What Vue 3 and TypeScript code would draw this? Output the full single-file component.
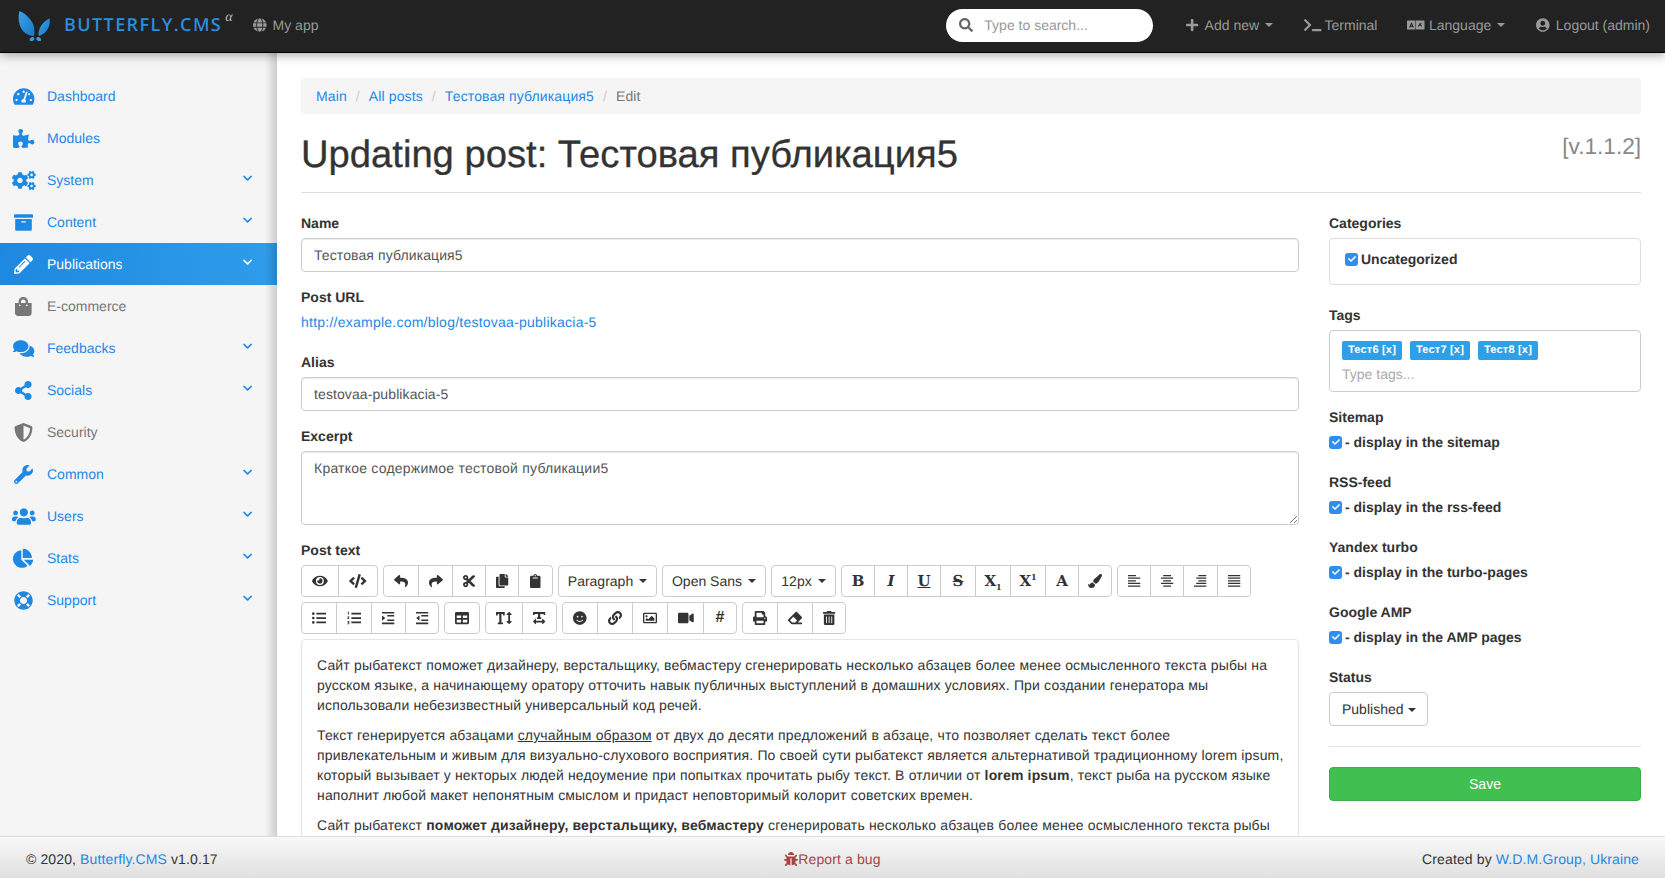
<template>
<div class="app">
  <header class="navbar">
    <div class="logo">
      <svg class="logo-mark" viewBox="0 0 36 33" aria-hidden="true">
        <defs>
          <linearGradient id="wing" x1="0" y1="0" x2="1" y2="1">
            <stop offset="0" stop-color="#35a5ee" />
            <stop offset="1" stop-color="#1b76c4" />
          </linearGradient>
        </defs>
        <path fill="url(#wing)" d="M1.500 0C-.5 8 1 17 6 22c3 3 8 4.500 11 4.500 1-6.500 0-13.500-4-17.500C10 5 5.500 1.500 1.500 0z" />
        <path fill="url(#wing)" d="M33.500 8c-5 2-9.500 7-11 12-.7 2.500-1 5-.5 6.500 4-1 8.500-4.500 10.500-9.500 1.200-3 1.300-6 1-9z" />
        <path fill="#2f9ee8" d="M15.500 27.500c-2-.2-3.700 2.500-3 4 .7 1 4.800.5 5-2.300 0-.9-1-1.600-2-1.700zM21 27.500c2-.2 4 2.300 3.500 3.700-.6 1.300-4.800 1-5.200-1.700 0-1 .7-1.900 1.700-2z" />
      </svg>
      <span class="logo-text">BUTTERFLY.CMS</span><sup class="logo-alpha">α</sup>
    </div>
    <a class="nav-link myapp"><Ico name="globe" class="nav-ico" />My app</a>
    <div class="search">
      <Ico name="search" class="search-ico" />
      <span>Type to search...</span>
    </div>
    <a class="nav-link add"><Ico name="plus" class="nav-ico" />Add new<i class="caret"></i></a>
    <a class="nav-link term"><Ico name="terminal" class="nav-ico tight" />Terminal</a>
    <a class="nav-link lang"><Ico name="language" class="nav-ico tight" />Language<i class="caret"></i></a>
    <a class="nav-link out"><Ico name="user" class="nav-ico" />Logout (admin)</a>
  </header>

  <div class="body">
    <aside class="sidebar">
      <a
        v-for="item in menu"
        :key="item.label"
        class="menu-item"
        :class="{ active: item.active, muted: item.muted }"
      >
        <span class="menu-ico"><Ico :name="item.icon" /></span>
        <span class="menu-label">{{ item.label }}</span>
        <Ico v-if="item.sub" name="chevron" class="chev" />
      </a>
    </aside>

    <main class="content">
      <ol class="crumbs">
        <li><a>Main</a></li>
        <li><a>All posts</a></li>
        <li><a>Тестовая публикация5</a></li>
        <li class="here">Edit</li>
      </ol>

      <div class="title-row">
        <h1>Updating post: Тестовая публикация5</h1>
        <span class="version">[v.1.1.2]</span>
      </div>

      <div class="columns">
        <section class="col-main">
          <label>Name</label>
          <div class="input">Тестовая публикация5</div>
          <label class="mt15">Post URL</label>
          <a class="url">http://example.com/blog/testovaa-publikacia-5</a>
          <label class="mt20">Alias</label>
          <div class="input">testovaa-publikacia-5</div>
          <label class="mt15">Excerpt</label>
          <div class="input area">
            Краткое содержимое тестовой публикации5
            <svg class="grip" viewBox="0 0 10 10"><path d="M9 2 2 9M9 6 6 9" stroke="#777" fill="none" /></svg>
          </div>
          <label class="mt15">Post text</label>

          <div v-for="(row, r) in toolbar" :key="r" class="tb-row">
            <div v-for="(group, g) in row" :key="g" class="tb-group">
              <button
                v-for="(b, i) in group"
                :key="i"
                class="tb-btn"
                :class="b.cls"
                :style="{ width: b.w + 'px' }"
              >
                <Ico v-if="b.icon" :name="b.icon" />
                <span v-else-if="b.text">{{ b.text }}<sub v-if="b.sub">{{ b.sub }}</sub><sup v-if="b.sup">{{ b.sup }}</sup></span>
                <i v-if="b.drop" class="caret dark"></i>
              </button>
            </div>
          </div>

          <div class="editor">
            <p>Сайт рыбатекст поможет дизайнеру, верстальщику, вебмастеру сгенерировать несколько абзацев более менее осмысленного текста рыбы на русском языке, а начинающему оратору отточить навык публичных выступлений в домашних условиях. При создании генератора мы использовали небезизвестный универсальный код речей.</p>
            <p>Текст генерируется абзацами <u>случайным образом</u> от двух до десяти предложений в абзаце, что позволяет сделать текст более привлекательным и живым для визуально-слухового восприятия. По своей сути рыбатекст является альтернативой традиционному lorem ipsum, который вызывает у некторых людей недоумение при попытках прочитать рыбу текст. В отличии от <b>lorem ipsum</b>, текст рыба на русском языке наполнит любой макет непонятным смыслом и придаст неповторимый колорит советских времен.</p>
            <p>Сайт рыбатекст <b>поможет дизайнеру, верстальщику, вебмастеру</b> сгенерировать несколько абзацев более менее осмысленного текста рыбы на русском языке, а начинающему оратору отточить навык публичных выступлений.</p>
          </div>
        </section>

        <section class="col-side">
          <label>Categories</label>
          <div class="box cats"><span class="check"><Ico name="tick" /></span><b>Uncategorized</b></div>
          <label class="mt20">Tags</label>
          <div class="box tags">
            <div class="tag-list">
              <span v-for="t in tags" :key="t" class="tag">{{ t }} [x]</span>
            </div>
            <span class="tag-input">Type tags...</span>
          </div>
          <template v-for="(o, i) in options" :key="o.title">
            <label :class="i === 0 ? 'mt15' : 'mt20'">{{ o.title }}</label>
            <div class="opt"><span class="check"><Ico name="tick" /></span><b>- {{ o.text }}</b></div>
          </template>
          <label class="mt20">Status</label>
          <div class="select">Published<i class="caret dark"></i></div>
          <hr />
          <button class="save">Save</button>
        </section>
      </div>
    </main>
  </div>

  <footer class="footer">
    <span>© 2020, <a>Butterfly.CMS</a> v1.0.17</span>
    <span class="bug"><Ico name="bug" />Report a bug</span>
    <span>Created by <a>W.D.M.Group, Ukraine</a></span>
  </footer>
</div>
</template>

<script setup lang="ts">
import { h } from 'vue'

type IconDef = { vb: string; d: string; eo?: boolean }

const bars = (ys: [number, number, number][]) =>
  ys.map(([x, y, w]) => `M${x} ${y}h${w}v44H${x}z`).join('')

const icons: Record<string, IconDef> = {
  globe: { vb: '0 0 496 512', d: 'M336.5 160C322 70.7 287.8 8 248 8s-74 62.7-88.5 152h177zM152 256c0 22.2 1.2 43.5 3.3 64h185.3c2.1-20.5 3.3-41.8 3.3-64s-1.2-43.5-3.3-64H155.3c-2.1 20.500-3.3 41.800-3.3 64zm324.700-96c-28.600-67.900-86.500-120.400-158-141.600 24.400 33.800 41.200 84.700 50 141.600h108zM177.200 18.400C105.800 39.600 47.800 92.100 19.300 160h108c8.700-56.900 25.500-107.800 49.900-141.600zM487.400 192H372.700c2.100 21 3.300 42.500 3.300 64s-1.200 43-3.300 64h114.600c5.500-20.500 8.600-41.800 8.600-64s-3.100-43.500-8.500-64zM120 256c0-21.500 1.200-43 3.300-64H8.600C3.200 212.500 0 233.800 0 256s3.200 43.500 8.600 64h114.600c-2-21-3.200-42.500-3.200-64zm39.500 96c14.500 89.300 48.700 152 88.500 152s74-62.700 88.500-152h-177zm159.300 141.600c71.400-21.200 129.400-73.700 158-141.600h-108c-8.800 56.900-25.600 107.800-50 141.600zM19.300 352c28.600 67.900 86.500 120.400 158 141.600-24.400-33.800-41.200-84.700-50-141.600h-108z' },
  search: { vb: '0 0 512 512', d: 'M505 442.700L405.300 343c-4.500-4.500-10.600-7-17-7H372c27.600-35.300 44-79.700 44-128C416 93.100 322.900 0 208 0S0 93.100 0 208s93.100 208 208 208c48.300 0 92.700-16.400 128-44v16.300c0 6.400 2.500 12.500 7 17l99.700 99.700c9.400 9.400 24.600 9.400 33.900 0l28.300-28.300c9.400-9.400 9.400-24.600.1-34zM208 336c-70.700 0-128-57.200-128-128 0-70.700 57.200-128 128-128 70.700 0 128 57.200 128 128 0 70.700-57.200 128-128 128z' },
  plus: { vb: '0 0 448 512', d: 'M416 208H272V64c0-17.670-14.330-32-32-32h-32c-17.670 0-32 14.330-32 32v144H32c-17.670 0-32 14.330-32 32v32c0 17.670 14.330 32 32 32h144v144c0 17.670 14.330 32 32 32h32c17.670 0 32-14.330 32-32V304h144c17.670 0 32-14.330 32-32v-32c0-17.670-14.330-32-32-32z' },
  terminal: { vb: '0 0 640 512', d: 'M257.981 272.971L63.638 467.314c-9.373 9.373-24.569 9.373-33.941 0L7.029 444.647c-9.357-9.357-9.375-24.522-.04-33.901L161.011 256 6.990 101.255c-9.335-9.379-9.317-24.544.04-33.901l22.667-22.667c9.373-9.373 24.569-9.373 33.941 0L257.981 239.030c9.373 9.372 9.373 24.568 0 33.941zM640 456v-32c0-13.255-10.745-24-24-24H312c-13.255 0-24 10.745-24 24v32c0 13.255 10.745 24 24 24h304c13.255 0 24-10.745 24-24z' },
  language: { vb: '0 0 640 512', eo: true, d: 'M20 90h290v332H20a20 20 0 0 1-20-20V110a20 20 0 0 1 20-20zM155 160l-75 190h45l12-34h56l12 34h45l-75-190h-20zm10 60l16 60h-32l16-60zM330 90h290a20 20 0 0 1 20 20v292a20 20 0 0 1-20 20H330V90zm60 70v36h70c-8 40-30 70-70 96l24 30c24-16 44-36 58-58 14 22 34 42 58 58l24-30c-26-16-44-36-56-60h34v-36H390z' },
  user: { vb: '0 0 496 512', d: 'M248 8C111 8 0 119 0 256s111 248 248 248 248-111 248-248S385 8 248 8zm0 96c48.600 0 88 39.400 88 88s-39.400 88-88 88-88-39.400-88-88 39.400-88 88-88zm0 344c-58.700 0-111.300-26.600-146.500-68.200 18.800-35.400 55.600-59.800 98.500-59.800 2.400 0 4.800.4 7.100 1.100 13 4.200 26.600 6.900 40.900 6.900 14.300 0 28-2.700 40.900-6.900 2.300-.7 4.700-1.100 7.100-1.100 42.900 0 79.700 24.400 98.500 59.800C359.300 421.400 306.700 448 248 448z' },
  chevron: { vb: '0 0 448 512', d: 'M207.029 381.476L12.686 187.132c-9.373-9.373-9.373-24.569 0-33.941l22.667-22.667c9.357-9.357 24.522-9.375 33.901-.04L224 284.505l154.745-154.021c9.379-9.335 24.544-9.317 33.901.04l22.667 22.667c9.373 9.373 9.373 24.569 0 33.941L240.971 381.476c-9.373 9.372-24.569 9.372-33.942 0z' },
  dashboard: { vb: '0 0 576 512', d: 'M288 32C128.940 32 0 160.940 0 320c0 52.800 14.250 102.260 39.060 144.800 5.610 9.620 16.300 15.200 27.440 15.200h443c11.140 0 21.830-5.580 27.440-15.200C561.750 422.260 576 372.800 576 320c0-159.060-128.940-288-288-288zm0 64c14.710 0 26.580 10.130 30.320 23.650-1.110 2.260-2.640 4.230-3.450 6.670l-9.220 27.670c-5.130 3.490-10.970 6.010-17.640 6.010-17.670 0-32-14.330-32-32S270.330 96 288 96zM96 384c-17.670 0-32-14.330-32-32s14.330-32 32-32 32 14.330 32 32-14.330 32-32 32zm48-160c-17.670 0-32-14.330-32-32s14.330-32 32-32 32 14.330 32 32-14.330 32-32 32zm246.770-72.410l-61.330 184C343.130 347.330 352 364.540 352 384c0 11.720-3.380 22.550-8.880 32H232.880c-5.500-9.450-8.880-20.280-8.880-32 0-33.940 26.500-61.430 59.900-63.590l61.340-184.010c4.170-12.560 17.730-19.450 30.360-15.170 12.570 4.190 19.350 17.790 15.170 30.360zm14.660 57.200l15.520-46.550c3.470-1.290 7.130-2.230 11.050-2.230 17.670 0 32 14.330 32 32s-14.330 32-32 32c-11.380-.01-20.890-6.280-26.570-15.220zM480 384c-17.670 0-32-14.330-32-32s14.330-32 32-32 32 14.330 32 32-14.330 32-32 32z' },
  puzzle: { vb: '0 0 576 512', d: 'M519.442 288.651c-41.519 0-59.500 31.593-82.058 31.593C377.409 320.244 432 144 432 144s-196.288 80-196.288-3.297c0-35.827 36.288-46.250 36.288-85.985C272 19.216 243.885 0 210.539 0c-34.654 0-66.366 18.891-66.366 56.346 0 41.364 31.711 59.277 31.711 81.750C175.885 207.719 0 166.758 0 166.758v333.237s178.635 41.047 178.635-28.662c0-22.473-40-40.107-40-81.471 0-37.456 29.250-56.346 63.577-56.346 33.673 0 61.788 19.216 61.788 54.717 0 39.735-36.288 50.158-36.288 85.985 0 60.803 129.675 25.730 181.230 25.730 0 0-34.725-120.101 25.827-120.101 35.962 0 46.423 36.152 86.308 36.152C556.712 416 576 387.990 576 354.443c0-34.199-18.962-65.792-56.558-65.792z' },
  cogs: { vb: '0 0 640 512', d: 'M512.100 191l-8.200 14.300c-3 5.300-9.400 7.500-15.100 5.400-11.800-4.400-22.600-10.700-32.100-18.600-4.600-3.800-5.800-10.500-2.800-15.700l8.200-14.300c-6.900-8-12.300-17.300-15.900-27.400h-16.500c-6 0-11.200-4.300-12.200-10.300-2-12-2.100-24.600 0-37.100 1-6 6.200-10.400 12.200-10.400h16.500c3.600-10.100 9-19.400 15.900-27.400l-8.200-14.300c-3-5.200-1.900-11.900 2.800-15.700 9.500-7.900 20.400-14.200 32.100-18.600 5.700-2.100 12.100.1 15.100 5.400l8.200 14.300c10.500-1.900 21.200-1.900 31.700 0L552 6.300c3-5.300 9.400-7.500 15.100-5.400 11.800 4.400 22.600 10.700 32.100 18.600 4.600 3.800 5.800 10.500 2.800 15.700l-8.200 14.300c6.900 8 12.300 17.300 15.900 27.400h16.500c6 0 11.200 4.300 12.200 10.300 2 12 2.100 24.600 0 37.100-1 6-6.200 10.400-12.200 10.400h-16.500c-3.600 10.100-9 19.400-15.900 27.400l8.200 14.300c3 5.200 1.900 11.900-2.800 15.700-9.500 7.900-20.400 14.200-32.100 18.600-5.700 2.100-12.100-.1-15.100-5.400l-8.200-14.300c-10.400 1.900-21.200 1.900-31.700 0zm-10.500-58.800c38.500 29.600 82.400-14.300 52.800-52.800-38.500-29.700-82.400 14.300-52.800 52.800zM386.300 286.100l33.700 16.800c10.100 5.800 14.500 18.100 10.500 29.100-8.900 24.200-26.400 46.400-42.600 65.800-7.400 8.900-20.200 11.100-30.300 5.300l-29.100-16.800c-16 13.700-34.600 24.600-54.900 31.700v33.600c0 11.600-8.300 21.600-19.700 23.600-24.600 4.200-50.400 4.400-75.900 0-11.500-2-20-11.900-20-23.600V418c-20.300-7.200-38.900-18-54.900-31.700L74 403c-10 5.800-22.900 3.600-30.300-5.300-16.200-19.400-33.300-41.600-42.200-65.700-4-10.900.4-23.200 10.500-29.100l33.300-16.800c-3.900-20.900-3.900-42.400 0-63.400L12 205.800c-10.100-5.800-14.600-18.100-10.500-29 8.900-24.200 26-46.400 42.200-65.800 7.400-8.900 20.200-11.100 30.300-5.300l29.100 16.800c16-13.700 34.600-24.600 54.900-31.700V57.100c0-11.500 8.200-21.500 19.600-23.500 24.600-4.200 50.500-4.400 76-.1 11.500 2 20 11.900 20 23.600v33.600c20.300 7.200 38.900 18 54.900 31.700l29.100-16.800c10-5.800 22.900-3.600 30.300 5.300 16.200 19.400 33.200 41.600 42.100 65.800 4 10.900.1 23.200-10 29.100l-33.700 16.800c3.900 21 3.900 42.500 0 63.500zm-117.600 21.100c59.200-77-28.700-164.900-105.700-105.700-59.200 77 28.700 164.900 105.700 105.700zm243.400 182.700l-8.200 14.300c-3 5.300-9.400 7.500-15.100 5.400-11.800-4.400-22.600-10.700-32.100-18.600-4.600-3.800-5.800-10.500-2.800-15.700l8.200-14.300c-6.900-8-12.300-17.300-15.900-27.400h-16.500c-6 0-11.200-4.300-12.200-10.300-2-12-2.100-24.600 0-37.100 1-6 6.200-10.400 12.200-10.400h16.500c3.600-10.100 9-19.400 15.900-27.400l-8.200-14.300c-3-5.200-1.900-11.900 2.800-15.700 9.500-7.900 20.400-14.200 32.100-18.600 5.700-2.100 12.100.1 15.100 5.400l8.200 14.300c10.500-1.900 21.200-1.900 31.700 0l8.200-14.300c3-5.300 9.400-7.500 15.100-5.400 11.800 4.400 22.600 10.700 32.100 18.600 4.600 3.800 5.800 10.500 2.800 15.700l-8.200 14.300c6.900 8 12.300 17.300 15.900 27.400h16.500c6 0 11.200 4.300 12.200 10.300 2 12 2.100 24.600 0 37.100-1 6-6.200 10.400-12.200 10.400h-16.500c-3.600 10.100-9 19.400-15.900 27.400l8.200 14.300c3 5.200 1.900 11.900-2.800 15.700-9.500 7.900-20.400 14.200-32.100 18.600-5.700 2.100-12.100-.1-15.100-5.400l-8.200-14.300c-10.400 1.900-21.200 1.900-31.700 0zM501.600 431c38.500 29.600 82.400-14.300 52.800-52.800-38.500-29.600-82.400 14.300-52.800 52.800z' },
  archive: { vb: '0 0 512 512', d: 'M32 448c0 17.700 14.300 32 32 32h384c17.700 0 32-14.300 32-32V160H32v288zm160-212c0-6.600 5.400-12 12-12h104c6.600 0 12 5.400 12 12v8c0 6.600-5.400 12-12 12H204c-6.600 0-12-5.400-12-12v-8zM480 32H32C14.300 32 0 46.300 0 64v48c0 8.800 7.200 16 16 16h480c8.800 0 16-7.200 16-16V64c0-17.700-14.300-32-32-32z' },
  pencil: { vb: '0 0 512 512', d: 'M497.900 142.100l-46.100 46.100c-4.700 4.700-12.300 4.700-17 0l-111-111c-4.700-4.700-4.700-12.300 0-17l46.100-46.100c18.700-18.700 49.100-18.700 67.900 0l60.100 60.100c18.800 18.700 18.800 49.100 0 67.900zM284.200 99.800L21.600 362.400.4 483.900c-2.900 16.400 11.400 30.600 27.800 27.800l121.500-21.300 262.600-262.600c4.700-4.700 4.700-12.300 0-17l-111-111c-4.800-4.700-12.400-4.700-17.100 0zM124.100 339.900c-5.500-5.500-5.500-14.300 0-19.800l154-154c5.500-5.500 14.300-5.500 19.800 0s5.500 14.300 0 19.800l-154 154c-5.500 5.500-14.300 5.500-19.800 0zM88 424h48v36.300l-64.500 11.300-31.100-31.100L51.700 376H88v48z' },
  bag: { vb: '0 0 448 512', d: 'M352 160v-32C352 57.420 294.579 0 224 0 153.420 0 96 57.420 96 128v32H0v272c0 44.183 35.817 80 80 80h288c44.183 0 80-35.817 80-80V160h-96zm-192-32c0-35.290 28.710-64 64-64s64 28.710 64 64v32H160v-32zm160 120c-13.255 0-24-10.745-24-24s10.745-24 24-24 24 10.745 24 24-10.745 24-24 24zm-192 0c-13.255 0-24-10.745-24-24s10.745-24 24-24 24 10.745 24 24-10.745 24-24 24z' },
  comments: { vb: '0 0 576 512', d: 'M416 192c0-88.400-93.100-160-208-160S0 103.600 0 192c0 34.300 14.100 65.900 38 92-13.400 30.200-35.500 54.200-35.800 54.500-2.200 2.300-2.800 5.700-1.500 8.700S4.800 352 8 352c36.600 0 66.900-12.300 88.700-25 32.200 15.700 70.300 25 111.300 25 114.900 0 208-71.600 208-160zm122 220c23.900-26 38-57.700 38-92 0-66.900-53.500-124.200-129.300-148.100.9 6.600 1.300 13.300 1.300 20.100 0 105.900-107.700 192-240 192-10.800 0-21.300-.8-31.700-1.900C207.800 439.600 281.800 480 368 480c41 0 79.100-9.200 111.300-25 21.800 12.700 52.100 25 88.700 25 3.200 0 6.100-1.900 7.300-4.800 1.300-2.900.7-6.300-1.500-8.700-.3-.3-22.400-24.200-35.800-54.500z' },
  share: { vb: '0 0 448 512', d: 'M352 320c-22.608 0-43.387 7.819-59.790 20.895l-102.486-64.054a96.551 96.551 0 0 0 0-41.683l102.486-64.054C308.613 184.181 329.392 192 352 192c53.019 0 96-42.981 96-96S405.019 0 352 0s-96 42.981-96 96c0 7.158.79 14.130 2.276 20.841L155.790 180.895C139.387 167.819 118.608 160 96 160c-53.019 0-96 42.981-96 96s42.981 96 96 96c22.608 0 43.387-7.819 59.790-20.895l102.486 64.054A96.301 96.301 0 0 0 256 416c0 53.019 42.981 96 96 96s96-42.981 96-96-42.981-96-96-96z' },
  shield: { vb: '0 0 512 512', d: 'M466.500 83.700l-192-80a48.150 48.150 0 0 0-36.900 0l-192 80C27.700 91.100 16 108.600 16 128c0 198.500 114.500 335.700 221.500 380.300 11.800 4.900 25.100 4.900 36.900 0C360.100 472.600 496 349.300 496 128c0-19.400-11.700-36.900-29.500-44.300zM256.100 446.300l-.1-381 175.900 73.300c-3.300 151.400-82.100 261.100-175.800 307.700z' },
  wrench: { vb: '0 0 512 512', d: 'M507.730 109.100c-2.240-9.030-13.540-12.090-20.120-5.510l-74.360 74.360-67.880-11.310-11.310-67.880 74.360-74.360c6.620-6.620 3.430-17.900-5.660-20.160-47.380-11.740-99.550.91-136.580 37.930-39.640 39.640-50.550 97.100-34.050 147.200L18.740 402.760c-24.990 24.990-24.990 65.510 0 90.500 24.990 24.990 65.510 24.990 90.500 0l213.210-213.210c50.120 16.710 107.470 5.680 147.370-34.220 37.070-37.070 49.700-89.320 37.910-136.730zM64 472c-13.250 0-24-10.750-24-24 0-13.260 10.750-24 24-24s24 10.740 24 24c0 13.250-10.750 24-24 24z' },
  users: { vb: '0 0 640 512', d: 'M96 224c35.300 0 64-28.700 64-64s-28.700-64-64-64-64 28.700-64 64 28.700 64 64 64zm448 0c35.300 0 64-28.700 64-64s-28.700-64-64-64-64 28.700-64 64 28.700 64 64 64zm32 32h-64c-17.600 0-33.500 7.100-45.100 18.600 40.300 22.100 68.900 62 75.100 109.400h66c17.700 0 32-14.300 32-32v-32c0-35.300-28.700-64-64-64zm-256 0c61.900 0 112-50.100 112-112S381.900 32 320 32 208 82.100 208 144s50.100 112 112 112zm76.800 32h-8.300c-20.800 10-43.900 16-68.500 16s-47.600-6-68.500-16h-8.300C179.600 288 128 339.600 128 403.200V432c0 26.500 21.500 48 48 48h288c26.500 0 48-21.500 48-48v-28.800c0-63.600-51.600-115.200-115.200-115.200zm-223.700-13.400C161.500 263.100 145.600 256 128 256H64c-35.300 0-64 28.700-64 64v32c0 17.700 14.300 32 32 32h65.900c6.300-47.400 34.900-87.300 75.200-109.400z' },
  pie: { vb: '0 0 544 512', d: 'M527.800 288H290.100l157.900 157.900c6 6 15.900 6.500 22.100.7 38.700-36.400 65.300-85.500 73.100-140.700 1.300-9.400-6.100-17.900-15.400-17.900zM511.100 226.600C503 102.400 403.700 3.200 279.500-5c-8.700-.6-16 6.700-16 15.400V240h229.600c8.700 0 16.600-7.300 16-16zM224 288V46c0-9.300-8.400-16.700-17.600-15.400C87.500 47.400-3.800 151.400.2 275.700c4.100 127.700 114 233 241.800 232.300 50.400-.3 97-16.700 135-44.100 7.900-5.700 8.400-17.300 1.500-24.200L224 288z' },
  ring: { vb: '0 0 512 512', d: 'M256 8C119 8 8 119 8 256s111 248 248 248 248-111 248-248S393 8 256 8zm173.696 119.559l-63.399 63.399c-10.987-18.559-26.670-34.252-45.255-45.255l63.399-63.399a218.396 218.396 0 0 1 45.255 45.255zM256 352c-53.019 0-96-42.981-96-96s42.981-96 96-96 96 42.981 96 96-42.981 96-96 96zM127.559 82.304l63.399 63.399c-18.559 10.987-34.252 26.670-45.255 45.255l-63.399-63.399a218.372 218.372 0 0 1 45.255-45.255zM82.304 384.441l63.399-63.399c10.987 18.559 26.670 34.252 45.255 45.255l-63.399 63.399a218.396 218.396 0 0 1-45.255-45.255zm302.137 45.255l-63.399-63.399c18.559-10.987 34.252-26.670 45.255-45.255l63.399 63.399a218.403 218.403 0 0 1-45.255 45.255z' },
  eye: { vb: '0 0 576 512', d: 'M572.520 241.400C518.290 135.590 410.930 64 288 64S57.680 135.640 3.480 241.410a32.350 32.350 0 0 0 0 29.190C57.710 376.410 165.070 448 288 448s230.320-71.640 284.520-177.410a32.350 32.350 0 0 0 0-29.190zM288 400a144 144 0 1 1 144-144 143.930 143.930 0 0 1-144 144zm0-240a95.310 95.310 0 0 0-25.310 3.790 47.850 47.850 0 0 1-66.900 66.900A95.780 95.780 0 1 0 288 160z' },
  code: { vb: '0 0 640 512', d: 'M278.900 511.500l-61-17.700c-6.400-1.800-10-8.500-8.200-14.900L346.200 8.700c1.800-6.400 8.500-10 14.900-8.200l61 17.700c6.400 1.800 10 8.500 8.200 14.900L293.800 503.300c-1.900 6.400-8.500 10.100-14.900 8.200zm-114-112.200l43.500-46.400c4.600-4.900 4.300-12.700-.8-17.200L117 256l90.600-79.700c5.100-4.500 5.500-12.300.8-17.200l-43.500-46.400c-4.500-4.800-12.100-5.100-17-.5L3.800 247.200c-5.100 4.700-5.100 12.800 0 17.500l144.100 135.100c4.900 4.600 12.500 4.400 17-.5zm327.200.6l144.100-135.100c5.100-4.700 5.100-12.800 0-17.500L492.100 112.100c-4.800-4.500-12.400-4.300-17 .5L431.600 159c-4.600 4.900-4.300 12.700.8 17.200L523 256l-90.600 79.700c-5.100 4.500-5.500 12.300-.8 17.200l43.500 46.400c4.500 4.900 12.100 5.100 17 .6z' },
  undo: { vb: '0 0 512 512', d: 'M8.309 189.836L184.313 37.851C199.719 24.546 224 35.347 224 56.015v80.053c160.629 1.839 288 34.032 288 186.258 0 61.441-39.581 122.309-83.333 154.132-13.653 9.931-33.111-2.533-28.077-18.631 45.344-145.012-21.507-183.510-176.590-185.742V360c0 20.700-24.300 31.453-39.687 18.164l-176.004-152c-11.071-9.562-11.086-26.753 0-36.328z' },
  cut: { vb: '0 0 448 512', d: 'M278.060 256L444.480 89.570c4.690-4.690 4.690-12.290 0-16.970-32.800-32.800-85.990-32.800-118.790 0L210.180 188.120l-24.860-24.860c4.310-10.920 6.680-22.810 6.680-35.260 0-53.020-42.980-96-96-96S0 74.980 0 128s42.980 96 96 96c4.540 0 8.990-.32 13.360-.93L142.290 256l-32.930 32.930c-4.370-.61-8.830-.93-13.360-.93-53.020 0-96 42.980-96 96s42.980 96 96 96 96-42.980 96-96c0-12.450-2.370-24.340-6.680-35.260l24.860-24.860L325.690 439.400c32.800 32.800 85.990 32.800 118.790 0 4.690-4.680 4.690-12.280 0-16.970L278.060 256zM96 160c-17.640 0-32-14.360-32-32s14.360-32 32-32 32 14.360 32 32-14.360 32-32 32zm0 256c-17.640 0-32-14.360-32-32s14.360-32 32-32 32 14.360 32 32-14.360 32-32 32z' },
  copy: { vb: '0 0 448 512', d: 'M320 448v40c0 13.255-10.745 24-24 24H24c-13.255 0-24-10.745-24-24V120c0-13.255 10.745-24 24-24h72v296c0 30.879 25.121 56 56 56h168zm0-344V0H152c-13.255 0-24 10.745-24 24v368c0 13.255 10.745 24 24 24h272c13.255 0 24-10.745 24-24V128H344c-13.200 0-24-10.800-24-24zm120.971-31.029L375.029 7.029A24 24 0 0 0 358.059 0H352v96h96v-6.059a24 24 0 0 0-7.029-16.970z' },
  paste: { vb: '0 0 384 512', d: 'M384 112v352c0 26.510-21.490 48-48 48H48c-26.510 0-48-21.490-48-48V112c0-26.510 21.490-48 48-48h80c0-35.290 28.710-64 64-64s64 28.710 64 64h80c26.510 0 48 21.490 48 48zM192 40c-13.255 0-24 10.745-24 24s10.745 24 24 24 24-10.745 24-24-10.745-24-24-24m96 114v-20a6 6 0 0 0-6-6H102a6 6 0 0 0-6 6v20a6 6 0 0 0 6 6h180a6 6 0 0 0 6-6z' },
  brush: { vb: '0 0 512 512', d: 'M167.020 309.340c-40.120 2.580-76.530 17.860-97.190 72.300-2.350 6.210-8 9.980-14.590 9.980-11.110 0-45.460-27.670-55.250-34.350C0 439.620 37.930 512 128 512c75.860 0 128-43.770 128-120.190 0-3.110-.65-6.080-.97-9.130l-88.010-73.340zM457.890 0c-15.160 0-29.370 6.710-40.210 16.450C213.270 199.050 192 203.340 192 257.090c0 13.700 3.250 26.760 8.730 38.700l63.820 53.180c7.210 1.800 14.640 3.030 22.390 3.030 62.110 0 98.110-45.470 211.160-256.460 7.380-14.350 13.900-29.850 13.900-45.990C512 20.640 486 0 457.890 0z' },
  alignLeft: { vb: '0 0 448 512', d: bars([[0, 36, 290], [0, 132, 448], [0, 228, 290], [0, 324, 448], [0, 420, 448]]) },
  alignCenter: { vb: '0 0 448 512', d: bars([[80, 36, 288], [0, 132, 448], [80, 228, 288], [0, 324, 448], [80, 420, 288]]) },
  alignRight: { vb: '0 0 448 512', d: bars([[158, 36, 290], [80, 132, 368], [158, 228, 290], [80, 324, 368], [0, 420, 448]]) },
  justify: { vb: '0 0 448 512', d: bars([[0, 36, 448], [0, 132, 448], [0, 228, 448], [0, 324, 448], [0, 420, 448]]) },
  listUl: { vb: '0 0 512 512', d: 'M48 48a48 48 0 1 0 48 48 48 48 0 0 0-48-48zm0 160a48 48 0 1 0 48 48 48 48 0 0 0-48-48zm0 160a48 48 0 1 0 48 48 48 48 0 0 0-48-48zM160 64h352v64H160zM160 224h352v64H160zM160 384h352v64H160z' },
  listOl: { vb: '0 0 512 512', d: 'M160 64h352v64H160zM160 224h352v64H160zM160 384h352v64H160zM24 30h44v110H40V60H24zM12 200h72v28l-40 40h40v24H12v-26l42-42H12zM12 370h72v110H12v-24h46v-20H30v-22h28v-20H12z' },
  indent: { vb: '0 0 448 512', d: 'M0 32h448v56H0zM0 424h448v56H0zM192 144h256v56H192zM192 312h256v56H192zM0 160l120 96L0 352z' },
  outdent: { vb: '0 0 448 512', d: 'M0 32h448v56H0zM0 424h448v56H0zM192 144h256v56H192zM192 312h256v56H192zM128 160L8 256l120 96z' },
  table: { vb: '0 0 512 512', d: 'M464 32H48C21.490 32 0 53.490 0 80v352c0 26.510 21.490 48 48 48h416c26.510 0 48-21.490 48-48V80c0-26.510-21.490-48-48-48zM224 416H64v-96h160v96zm0-160H64v-96h160v96zm224 160H288v-96h160v96zm0-160H288v-96h160v96z' },
  textHeight: { vb: '0 0 576 512', d: 'M304 32H16A16 16 0 0 0 0 48v96a16 16 0 0 0 16 16h32a16 16 0 0 0 16-16v-32h56v304H80a16 16 0 0 0-16 16v32a16 16 0 0 0 16 16h160a16 16 0 0 0 16-16v-32a16 16 0 0 0-16-16h-40V112h56v32a16 16 0 0 0 16 16h32a16 16 0 0 0 16-16V48a16 16 0 0 0-16-16zm256 336h-48V144h48c14.310 0 21.330-17.310 11.310-27.310l-80-80a16 16 0 0 0-22.620 0l-80 80C379.360 126 384.360 144 400 144h48v224h-48c-14.310 0-21.330 17.310-11.310 27.310l80 80a16 16 0 0 0 22.620 0l80-80C580.640 386 575.640 368 560 368z' },
  textWidth: { vb: '0 0 448 512', d: 'M432 32H16A16 16 0 0 0 0 48v80a16 16 0 0 0 16 16h32a16 16 0 0 0 16-16v-16h120v112h-24a16 16 0 0 0-16 16v32a16 16 0 0 0 16 16h128a16 16 0 0 0 16-16v-32a16 16 0 0 0-16-16h-24V112h120v16a16 16 0 0 0 16 16h32a16 16 0 0 0 16-16V48a16 16 0 0 0-16-16zm-68.690 260.690C354 283.360 336 288.360 336 304v48H112v-48c0-14.310-17.310-21.330-27.310-11.310l-80 80a16 16 0 0 0 0 22.620l80 80C94 484.640 112 479.640 112 464v-48h224v48c0 14.310 17.310 21.330 27.310 11.310l80-80a16 16 0 0 0 0-22.620z' },
  smile: { vb: '0 0 496 512', d: 'M248 8C111 8 0 119 0 256s111 248 248 248 248-111 248-248S385 8 248 8zm80 168c17.700 0 32 14.300 32 32s-14.300 32-32 32-32-14.300-32-32 14.300-32 32-32zm-160 0c17.700 0 32 14.300 32 32s-14.300 32-32 32-32-14.300-32-32 14.300-32 32-32zm194.800 170.200C334.300 380.400 292.500 400 248 400s-86.300-19.600-114.800-53.800c-13.600-16.300 11-36.700 24.600-20.500 22.400 26.900 55.200 42.200 90.200 42.200s67.800-15.400 90.200-42.200c13.400-16.200 38.100 4.200 24.600 20.500z' },
  link: { vb: '0 0 512 512', d: 'M326.612 185.391c59.747 59.809 58.927 155.698.36 214.590-.11.12-.24.25-.36.37l-67.200 67.200c-59.270 59.270-155.699 59.262-214.960 0-59.270-59.260-59.270-155.700 0-214.960l37.106-37.106c9.840-9.840 26.786-3.300 27.294 10.606.648 17.722 3.826 35.527 9.690 52.721 1.986 5.822.567 12.262-3.783 16.612l-13.087 13.087c-28.026 28.026-28.905 73.660-1.155 101.960 28.024 28.579 74.086 28.749 102.325.51l67.200-67.190c28.191-28.191 28.073-73.757 0-101.830-3.701-3.694-7.429-6.564-10.341-8.569a16.037 16.037 0 0 1-6.947-12.606c-.396-10.567 3.348-21.456 11.698-29.806l21.054-21.055c5.521-5.521 14.182-6.199 20.584-1.731a152.482 152.482 0 0 1 20.522 17.197zM467.547 44.449c-59.261-59.262-155.690-59.270-214.960 0l-67.200 67.200c-.12.12-.25.25-.36.37-58.566 58.892-59.387 154.781.36 214.590a152.454 152.454 0 0 0 20.521 17.196c6.402 4.468 15.064 3.789 20.584-1.731l21.054-21.055c8.350-8.350 12.094-19.239 11.698-29.806a16.037 16.037 0 0 0-6.947-12.606c-2.912-2.005-6.640-4.875-10.341-8.569-28.073-28.073-28.191-73.639 0-101.830l67.200-67.190c28.239-28.239 74.300-28.069 102.325.51 27.750 28.300 26.872 73.934-1.155 101.960l-13.087 13.087c-4.350 4.350-5.769 10.790-3.783 16.612 5.864 17.194 9.042 34.999 9.690 52.721.509 13.906 17.454 20.446 27.294 10.606l37.106-37.106c59.271-59.259 59.271-155.699.001-214.959z' },
  image: { vb: '0 0 512 512', d: 'M464 64H48C21.490 64 0 85.490 0 112v288c0 26.510 21.490 48 48 48h416c26.510 0 48-21.490 48-48V112c0-26.510-21.490-48-48-48zm-6 336H54a6 6 0 0 1-6-6V118a6 6 0 0 1 6-6h404a6 6 0 0 1 6 6v276a6 6 0 0 1-6 6zM128 152c-22.091 0-40 17.909-40 40s17.909 40 40 40 40-17.909 40-40-17.909-40-40-40zM96 352h320v-80l-87.515-87.515c-4.686-4.686-12.284-4.686-16.971 0L192 304l-39.515-39.515c-4.686-4.686-12.284-4.686-16.971 0L96 304v48z' },
  video: { vb: '0 0 576 512', d: 'M336.200 64H47.800C21.400 64 0 85.400 0 111.800v288.400C0 426.600 21.400 448 47.800 448h288.400c26.400 0 47.800-21.400 47.800-47.800V111.800c0-26.400-21.400-47.800-47.800-47.800zm189.400 37.700L416 177.300v157.400l109.600 75.500c21.200 14.600 50.400-.3 50.400-25.800V127.500c0-25.400-29.100-40.400-50.400-25.800z' },
  print: { vb: '0 0 512 512', d: 'M448 192V77.250c0-8.490-3.370-16.620-9.370-22.630L393.370 9.370c-6-6-14.140-9.370-22.630-9.370H96C78.330 0 64 14.330 64 32v160c-35.350 0-64 28.650-64 64v112c0 8.840 7.160 16 16 16h48v96c0 17.670 14.330 32 32 32h320c17.670 0 32-14.330 32-32v-96h48c8.840 0 16-7.160 16-16V256c0-35.350-28.650-64-64-64zm-64 256H128v-96h256v96zm0-224H128V64h192v48c0 8.840 7.160 16 16 16h48v96zm48 72c-13.250 0-24-10.750-24-24 0-13.260 10.750-24 24-24s24 10.740 24 24c0 13.250-10.750 24-24 24z' },
  eraser: { vb: '0 0 512 512', d: 'M497.941 273.941c18.745-18.745 18.745-49.137 0-67.882l-160-160c-18.745-18.745-49.136-18.746-67.883 0l-256 256c-18.745 18.745-18.745 49.137 0 67.882l96 96A48.004 48.004 0 0 0 144 480h356c6.627 0 12-5.373 12-12v-40c0-6.627-5.373-12-12-12H355.883l142.058-142.059zm-302.627-62.627l137.373 137.373L265.373 416H150.628l-80-80 124.686-124.686z' },
  trash: { vb: '0 0 448 512', d: 'M32 464a48 48 0 0 0 48 48h288a48 48 0 0 0 48-48V128H32zm272-256a16 16 0 0 1 32 0v224a16 16 0 0 1-32 0zm-96 0a16 16 0 0 1 32 0v224a16 16 0 0 1-32 0zm-96 0a16 16 0 0 1 32 0v224a16 16 0 0 1-32 0zM432 32H312l-9.400-18.700A24 24 0 0 0 281.100 0H166.800a23.720 23.720 0 0 0-21.400 13.300L136 32H16A16 16 0 0 0 0 48v32a16 16 0 0 0 16 16h416a16 16 0 0 0 16-16V48a16 16 0 0 0-16-16z' },
  bug: { vb: '0 0 512 512', d: 'M511.988 288.900c-.478 17.430-15.217 31.100-32.653 31.100H424v16c0 21.864-4.882 42.584-13.600 61.145l60.228 60.228c12.496 12.497 12.496 32.758 0 45.255-12.498 12.497-32.759 12.496-45.256 0l-54.736-54.736C345.886 467.965 314.351 480 280 480V236c0-6.627-5.373-12-12-12h-24c-6.627 0-12 5.373-12 12v244c-34.351 0-65.886-12.035-90.636-32.108l-54.736 54.736c-12.498 12.497-32.759 12.496-45.256 0-12.496-12.497-12.496-32.758 0-45.255l60.228-60.228C92.882 378.584 88 357.864 88 336v-16H32.666C15.230 320 .491 306.330.013 288.900-.484 270.816 14.028 256 32 256h56v-58.745l-46.628-46.628c-12.496-12.497-12.496-32.758 0-45.255 12.498-12.497 32.758-12.497 45.256 0L141.255 160h229.489l54.627-54.627c12.498-12.497 32.758-12.497 45.256 0 12.496 12.497 12.496 32.758 0 45.255L424 197.255V256h56c17.972 0 32.484 14.816 31.988 32.900zM257 0c-61.856 0-112 50.144-112 112h224C369 50.144 318.856 0 257 0z' },
  tick: { vb: '0 0 512 512', d: 'M173.898 439.404l-166.400-166.400c-9.997-9.997-9.997-26.206 0-36.204l36.203-36.204c9.997-9.998 26.207-9.998 36.204 0L192 312.690 432.095 72.596c9.997-9.997 26.207-9.997 36.204 0l36.203 36.204c9.997 9.997 9.997 26.206 0 36.204l-294.400 294.401c-9.998 9.997-26.207 9.997-36.204-.001z' }
}

// small helper component so the template stays readable
const Ico = (props: { name: string }) => {
  const def = icons[props.name]
  const vbWidth = Number(def.vb.split(' ')[2])
  return h('svg', { class: 'ico', viewBox: def.vb, style: { width: vbWidth / 512 + 'em' }, 'aria-hidden': 'true' }, [
    h('path', { d: def.d, fill: 'currentColor', 'fill-rule': def.eo ? 'evenodd' : undefined })
  ])
}
Ico.props = ['name']

type MenuItem = { label: string; icon: string; sub?: boolean; active?: boolean; muted?: boolean }

const menu: MenuItem[] = [
  { label: 'Dashboard', icon: 'dashboard' },
  { label: 'Modules', icon: 'puzzle' },
  { label: 'System', icon: 'cogs', sub: true },
  { label: 'Content', icon: 'archive', sub: true },
  { label: 'Publications', icon: 'pencil', sub: true, active: true },
  { label: 'E-commerce', icon: 'bag', muted: true },
  { label: 'Feedbacks', icon: 'comments', sub: true },
  { label: 'Socials', icon: 'share', sub: true },
  { label: 'Security', icon: 'shield', muted: true },
  { label: 'Common', icon: 'wrench', sub: true },
  { label: 'Users', icon: 'users', sub: true },
  { label: 'Stats', icon: 'pie', sub: true },
  { label: 'Support', icon: 'ring', sub: true }
]

type Btn = { w: number; icon?: string; text?: string; drop?: boolean; cls?: string; sub?: string; sup?: string }

const toolbar: Btn[][][] = [
  [
    [{ w: 38, icon: 'eye' }, { w: 40, icon: 'code' }],
    [{ w: 36, icon: 'undo' }, { w: 35, icon: 'undo', cls: 'flip' }, { w: 34, icon: 'cut' }, { w: 34, icon: 'copy' }, { w: 35, icon: 'paste' }],
    [{ w: 99, text: 'Paragraph', drop: true, cls: 'txt' }],
    [{ w: 104, text: 'Open Sans', drop: true, cls: 'txt' }],
    [{ w: 65, text: '12px', drop: true, cls: 'txt' }],
    [
      { w: 34, text: 'B', cls: 'serif' },
      { w: 34, text: 'I', cls: 'serif it' },
      { w: 34, text: 'U', cls: 'serif und' },
      { w: 36, text: 'S', cls: 'serif strike' },
      { w: 36, text: 'X', sub: '1', cls: 'serif' },
      { w: 36, text: 'X', sup: '1', cls: 'serif' },
      { w: 34, text: 'A', cls: 'serif big' },
      { w: 34, icon: 'brush' }
    ],
    [{ w: 34, icon: 'alignLeft' }, { w: 34, icon: 'alignCenter' }, { w: 35, icon: 'alignRight' }, { w: 34, icon: 'justify' }]
  ],
  [
    [{ w: 36, icon: 'listUl' }, { w: 36, icon: 'listOl' }, { w: 35, icon: 'indent' }, { w: 34, icon: 'outdent' }],
    [{ w: 36, icon: 'table' }],
    [{ w: 38, icon: 'textHeight' }, { w: 35, icon: 'textWidth' }],
    [{ w: 36, icon: 'smile' }, { w: 36, icon: 'link' }, { w: 36, icon: 'image' }, { w: 37, icon: 'video' }, { w: 34, text: '#', cls: 'hash' }],
    [{ w: 36, icon: 'print' }, { w: 36, icon: 'eraser' }, { w: 34, icon: 'trash' }]
  ]
]

const tags = ['Тест6', 'Тест7', 'Тест8']

const options = [
  { title: 'Sitemap', text: 'display in the sitemap' },
  { title: 'RSS-feed', text: 'display in the rss-feed' },
  { title: 'Yandex turbo', text: 'display in the turbo-pages' },
  { title: 'Google AMP', text: 'display in the AMP pages' }
]
</script>

<style>
html, body { margin: 0; height: 100%; overflow: hidden; }
</style>

<style scoped>
.app {
  height: 878px;
  display: flex;
  flex-direction: column;
  overflow: hidden;
  font: 14px/20px "Liberation Sans", Arial, sans-serif;
  text-rendering: geometricPrecision;
  color: #333;
  background: #fff;
}
a { color: #1e88e5; text-decoration: none; }
:deep(.ico) { display: block; height: 1em; flex: none; overflow: visible; }

/* navbar */
.navbar {
  flex: none;
  height: 53px;
  box-sizing: border-box;
  padding-bottom: 2px;
  display: flex;
  align-items: center;
  background: #222;
  border-bottom: 1px solid #000;
  box-shadow: 0 2px 10px rgba(0, 0, 0, .35);
  position: relative;
  z-index: 3;
  color: #999;
}
.logo { display: flex; align-items: center; width: 253px; flex: none; padding-left: 18px; box-sizing: border-box; }
.logo-mark { width: 34px; height: 33px; flex: none; margin: 2px 12px 0 0; }
.logo-text {
  font: 600 18px/24px "Open Sans", sans-serif;
  letter-spacing: 1.4px;
  color: #2b8ddb;
}
.logo-alpha { font: italic 14px/14px "Liberation Serif", serif; color: #bbb; margin: -14px 0 0 3px; }
.nav-link { display: flex; align-items: center; color: #999; flex: none; }
.nav-ico { font-size: 14px; margin-right: 6px; }
.nav-ico.tight { margin-right: 3px; }
.lang .nav-ico.tight { margin-right: 4px; }
.search {
  flex: none;
  width: 207px;
  height: 33px;
  margin-left: auto;
  background: #fff;
  border-radius: 17px;
  display: flex;
  align-items: center;
  padding-left: 13px;
  box-sizing: border-box;
  color: #999;
}
.search-ico { font-size: 14px; color: #666; margin-right: 11px; }
.add { margin-left: 33px; }
.term { margin-left: 31px; }
.lang { margin-left: 30px; }
.out { margin: 0 15px 0 31px; }
.caret {
  display: inline-block;
  margin-left: 6px;
  border-top: 4px solid currentColor;
  border-left: 4px solid transparent;
  border-right: 4px solid transparent;
}
.caret.dark { color: #333; }

/* layout */
.body { flex: 1; min-height: 0; display: flex; }
.sidebar {
  flex: none;
  width: 277px;
  box-sizing: border-box;
  padding-top: 22px;
  background: #f5f5f5;
  position: relative;
  z-index: 2;
}
.sidebar::after {
  content: "";
  position: absolute;
  top: 0;
  right: 0;
  bottom: 0;
  width: 12px;
  background: linear-gradient(90deg, rgba(0, 0, 0, 0), rgba(0, 0, 0, .16));
  pointer-events: none;
}
.menu-item { display: flex; align-items: center; height: 42px; padding-right: 25px; color: #1e88e5; }
.menu-item.muted { color: #777; }
.menu-item.active { color: #fff; background: linear-gradient(90deg, #1e88e0, #2f9dea); }
.menu-ico { flex: none; width: 47px; display: flex; justify-content: center; font-size: 19px; }
.menu-label { flex: 1; }
.chev { font-size: 10.500px; flex: none; margin-top: -3px; }

.content { flex: 1; min-width: 0; overflow: hidden; padding: 25px 24px 0; }
.crumbs {
  display: flex;
  height: 36px;
  align-items: center;
  margin: 0;
  padding: 0 15px;
  list-style: none;
  background: #f5f5f5;
  border-radius: 4px;
  letter-spacing: .12px;
}
.crumbs li + li::before { content: "/"; padding: 0 9px; color: #ccc; }
.crumbs .here { color: #777; }

.title-row {
  display: flex;
  justify-content: space-between;
  margin-top: 21px;
  padding-bottom: 17px;
  border-bottom: 1px solid #ddd;
}
h1 {
  margin: 0;
  font: 400 38.200px/40px "Liberation Sans", Arial, sans-serif;
  color: #333;
  -webkit-text-stroke: .3px #333;
}
.version { font-size: 22.600px; line-height: 24px; color: #888; }

.columns { display: flex; gap: 30px; margin-top: 20px; }
.col-main { width: 998px; flex: none; }
.col-side { flex: 1; min-width: 0; }
label { display: block; font-weight: 700; margin-bottom: 5px; }
.mt15 { margin-top: 15px; }
.mt20 { margin-top: 20px; }
.input {
  height: 34px;
  box-sizing: border-box;
  padding: 6px 12px;
  border: 1px solid #ccc;
  border-radius: 4px;
  color: #555;
  letter-spacing: .1px;
  box-shadow: inset 0 1px 1px rgba(0, 0, 0, .075);
}
.input.area { height: 74px; position: relative; letter-spacing: .22px; }
.grip { position: absolute; right: 0; bottom: 0; width: 10px; height: 10px; }
.url { display: block; letter-spacing: .24px; }

.tb-row { display: flex; gap: 5px; margin-bottom: 5px; }
.tb-group { display: flex; }
.tb-btn {
  height: 32px;
  padding: 0;
  margin-left: -1px;
  display: flex;
  align-items: center;
  justify-content: center;
  background: #fff;
  border: 1px solid #ccc;
  color: #333;
  font: 14px/1 "Liberation Sans", Arial, sans-serif;
  text-rendering: geometricPrecision;
}
.tb-btn:first-child { margin-left: 0; border-radius: 4px 0 0 4px; }
.tb-btn:last-child { border-radius: 0 4px 4px 0; }
.tb-btn:only-child { border-radius: 4px; }
.tb-btn.flip :deep(.ico) { transform: scaleX(-1); }
.tb-btn.serif { font: 700 15px/1 "DejaVu Serif", serif; }
.tb-btn.it { font-style: italic; }
.tb-btn.und span { text-decoration: underline; }
.tb-btn.strike span { text-decoration: line-through; }
.tb-btn.hash { font: 700 16px/1 "Liberation Sans", sans-serif; }
.tb-btn sub, .tb-btn sup { font-size: 8px; line-height: 0; }

.editor {
  padding: 15px 12px 0 15px;
  border: 1px solid #e5e5e5;
  border-radius: 4px 4px 0 0;
  color: #333;
  letter-spacing: .16px;
}
.editor p { margin: 0 0 10px; }

.box { border: 1px solid #ddd; border-radius: 4px; box-sizing: border-box; }
.cats { height: 47px; display: flex; align-items: center; padding: 0 0 5px 15px; }
.tags { height: 62px; padding: 10px 12px 0; border-color: #ccc; }
.tag-list { display: flex; gap: 8px; }
.tag {
  height: 19px;
  width: 60px;
  background: #2f9fe8;
  border-radius: 2px;
  color: #fff;
  font: 700 11px/19px "Liberation Sans", sans-serif;
  letter-spacing: .2px;
  text-align: center;
}
.tag-input { display: block; margin-top: 4px; color: #aaa; }
.check {
  flex: none;
  width: 13px;
  height: 13px;
  margin-right: 3px;
  display: flex;
  align-items: center;
  justify-content: center;
  background: #2f8ff0;
  border-radius: 3px;
  color: #fff;
  font-size: 8px;
}
.opt { display: flex; align-items: center; height: 20px; }
.select {
  width: 99px;
  height: 34px;
  box-sizing: border-box;
  border: 1px solid #ccc;
  border-radius: 4px;
  padding: 6px 0 6px 12px;
  white-space: nowrap;
}
.select .caret { vertical-align: middle; margin-left: 4px; }
hr { border: 0; border-top: 1px solid #e4e4e4; margin: 20px 0; }
.save {
  display: block;
  width: 100%;
  height: 34px;
  background: #41bf51;
  border: 1px solid #3aad49;
  border-radius: 4px;
  color: #fff;
  font: 14px "Liberation Sans", Arial, sans-serif;
}

.footer {
  flex: none;
  height: 42px;
  box-sizing: border-box;
  padding: 2px 26px 0;
  display: grid;
  grid-template-columns: 1fr auto 1fr;
  align-items: center;
  background: linear-gradient(#f8f8f8, #e0e0e0);
  border-top: 1px solid #ddd;
  position: relative;
  z-index: 3;
  letter-spacing: .12px;
}
.footer > :last-child { justify-self: end; }
.bug { display: flex; align-items: center; color: #a94442; }
.bug :deep(.ico) { font-size: 14px; }
</style>
